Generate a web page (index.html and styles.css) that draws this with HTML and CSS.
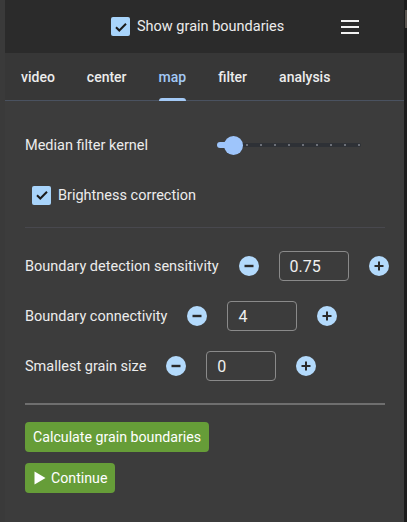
FILE: index.html
```html
<!DOCTYPE html>
<html>
<head>
<meta charset="utf-8">
<link rel="stylesheet" href="styles.css">
</head>
<body>
<div class="app">
  <div class="strip-left"></div>
  <div class="panel">
    <header class="header">
      <label class="check">
        <span class="box"><svg viewBox="0 0 18 18" width="18" height="18"><path d="M4 9.2l3.3 3.3L14 5.8" fill="none" stroke="#1b1b1b" stroke-width="2"/></svg></span>
        <span class="check-text">Show grain boundaries</span>
      </label>
      <div class="menu"><span></span><span></span><span></span></div>
    </header>
    <nav class="tabs">
      <div class="tab">video</div>
      <div class="tab">center</div>
      <div class="tab active">map</div>
      <div class="tab">filter</div>
      <div class="tab">analysis</div>
    </nav>
    <main class="content">
      <div class="slider-row">
        <span class="label slider-label">Median filter kernel</span>
        <div class="slider">
          <div class="track">
            <span class="active-part"></span>
            <span class="dot"></span><span class="dot"></span><span class="dot"></span><span class="dot"></span><span class="dot"></span><span class="dot"></span><span class="dot"></span><span class="dot"></span><span class="dot"></span>
          </div>
          <span class="thumb"></span>
        </div>
      </div>
      <label class="check check-row">
        <span class="box"><svg viewBox="0 0 18 18" width="18" height="18"><path d="M4 9.2l3.3 3.3L14 5.8" fill="none" stroke="#1b1b1b" stroke-width="2"/></svg></span>
        <span class="check-text">Brightness correction</span>
      </label>
      <hr class="sep thin">
      <div class="num-row">
        <span class="label">Boundary detection sensitivity</span>
        <span class="circ"><svg viewBox="0 0 20 20" width="20" height="20"><path d="M5.5 10h9" stroke="#2a2a2a" stroke-width="2.4"/></svg></span>
        <span class="input">0.75</span>
        <span class="circ"><svg viewBox="0 0 20 20" width="20" height="20"><path d="M5.5 10h9M10 5.5v9" stroke="#2a2a2a" stroke-width="2"/></svg></span>
      </div>
      <div class="num-row">
        <span class="label">Boundary connectivity</span>
        <span class="circ"><svg viewBox="0 0 20 20" width="20" height="20"><path d="M5.5 10h9" stroke="#2a2a2a" stroke-width="2.4"/></svg></span>
        <span class="input">4</span>
        <span class="circ"><svg viewBox="0 0 20 20" width="20" height="20"><path d="M5.5 10h9M10 5.5v9" stroke="#2a2a2a" stroke-width="2"/></svg></span>
      </div>
      <div class="num-row">
        <span class="label">Smallest grain size</span>
        <span class="circ"><svg viewBox="0 0 20 20" width="20" height="20"><path d="M5.5 10h9" stroke="#2a2a2a" stroke-width="2.4"/></svg></span>
        <span class="input">0</span>
        <span class="circ"><svg viewBox="0 0 20 20" width="20" height="20"><path d="M5.5 10h9M10 5.5v9" stroke="#2a2a2a" stroke-width="2"/></svg></span>
      </div>
      <hr class="sep thick">
      <div class="buttons">
        <button class="btn">Calculate grain boundaries</button>
        <button class="btn"><svg viewBox="0 0 12 14" width="12" height="14"><path d="M0.5 0.5L11.5 7L0.5 13.5Z" fill="#fff"/></svg>Continue</button>
      </div>
    </main>
  </div>
  <div class="strip-right"><span class="nub"></span></div>
</div>
</body>
</html>
```

FILE: styles.css
```css
* { box-sizing: border-box; }
html, body { margin: 0; padding: 0; }
body {
  width: 407px;
  height: 522px;
  overflow: hidden;
  background: #3c3c3c;
  font-family: Roboto, "Liberation Sans", sans-serif;
  font-size: 14px;
  color: #ececec;
}
.app {
  display: flex;
  height: 522px;
}
.strip-left {
  width: 5px;
  background: #3a3a3a;
}
.panel {
  width: 399px;
  background: #3c3c3c;
  display: flex;
  flex-direction: column;
}
.strip-right {
  width: 3px;
  background: #1c1c1c;
  position: relative;
}
.nub {
  position: absolute;
  left: 1px;
  top: 10px;
  width: 2px;
  height: 18px;
  background: #5a5550;
}
.header {
  height: 53px;
  background: #2b2b2b;
  display: flex;
  align-items: center;
  padding-left: 106px;
  padding-right: 45px;
}
.check {
  display: flex;
  align-items: center;
  gap: 7px;
  color: #ececec;
}
.box {
  width: 19px;
  height: 19px;
  border-radius: 2px;
  background: #a8d4fb;
  display: flex;
  align-items: center;
  justify-content: center;
}
.check-text { font-size: 14.5px; font-weight: 400; white-space: nowrap; }
.menu {
  margin-left: auto;
  width: 18px;
  display: flex;
  flex-direction: column;
  gap: 4px;
}
.menu span {
  height: 2px;
  background: #f2f2f2;
}
.tabs {
  height: 48px;
  background: #373737;
  display: flex;
  border-bottom: 1px solid #4a5260;
}
.tab {
  padding: 0 16px;
  display: flex;
  align-items: center;
  font-size: 14px;
  font-weight: 500;
  color: #ececec;
  position: relative;
}
.tab.active { color: #a3c9f5; }
.tab.active::after {
  content: "";
  position: absolute;
  left: 16px;
  right: 16px;
  bottom: -1px;
  height: 3px;
  border-radius: 3px 3px 0 0;
  background: #a3c9f5;
}
.content {
  padding: 29px 19px 0 20px;
}
.label {
  font-size: 14.5px;
  font-weight: 400;
  color: #ececec;
  white-space: nowrap;
  flex-shrink: 0;
}
.slider-row {
  height: 30px;
  display: flex;
  align-items: center;
}
.slider-label { width: 192px; }
.slider {
  width: 144px;
  height: 20px;
  position: relative;
  display: flex;
  align-items: center;
}
.track {
  width: 100%;
  height: 4px;
  background: #2e3136;
  border-radius: 2px;
  display: flex;
  align-items: center;
  justify-content: flex-end;
  gap: 12px;
  padding-right: 1px;
  position: relative;
}
.active-part {
  position: absolute;
  left: 0;
  top: -1px;
  width: 16px;
  height: 6px;
  border-radius: 3px;
  background: #9ec5fb;
}
.dot {
  width: 2px;
  height: 2px;
  background: #6c7078;
}
.thumb {
  position: absolute;
  left: 7px;
  top: 1px;
  width: 19px;
  height: 19px;
  border-radius: 50%;
  background: #9ec5fb;
}
.check-row {
  margin-top: 20px;
  margin-left: 7px;
  height: 30px;
  gap: 7px;
}
.sep {
  border: 0;
  margin: 0;
}
.sep.thin {
  margin-top: 17px;
  height: 1px;
  background: #48484e;
}
.num-row {
  margin-top: 23px;
  height: 30px;
  display: flex;
  align-items: center;
  gap: 20px;
}
.num-row + .num-row { margin-top: 20px; }
.circ {
  width: 20px;
  height: 20px;
  flex-shrink: 0;
  border-radius: 50%;
  background: #b3dafc;
  display: flex;
  align-items: center;
  justify-content: center;
}
.input {
  width: 70px;
  height: 30px;
  flex-shrink: 0;
  border: 1px solid #8a8a8a;
  border-radius: 4px;
  padding: 0 10px;
  display: flex;
  align-items: center;
  font-size: 16px;
  color: #f0f0f0;
}
.sep.thick {
  margin-top: 22px;
  height: 2px;
  background: #6f6f6f;
}
.buttons {
  margin-top: 17px;
  display: flex;
  flex-direction: column;
  align-items: flex-start;
  gap: 11px;
}
.btn {
  height: 30px;
  padding: 0 8px;
  border: 0;
  border-radius: 4px;
  background: #669d38;
  color: #fff;
  font-family: Roboto, "Liberation Sans", sans-serif;
  font-size: 14.2px;
  font-weight: 400;
  display: flex;
  align-items: center;
  gap: 5px;
}
.btn svg { margin-left: 1px; }
```
